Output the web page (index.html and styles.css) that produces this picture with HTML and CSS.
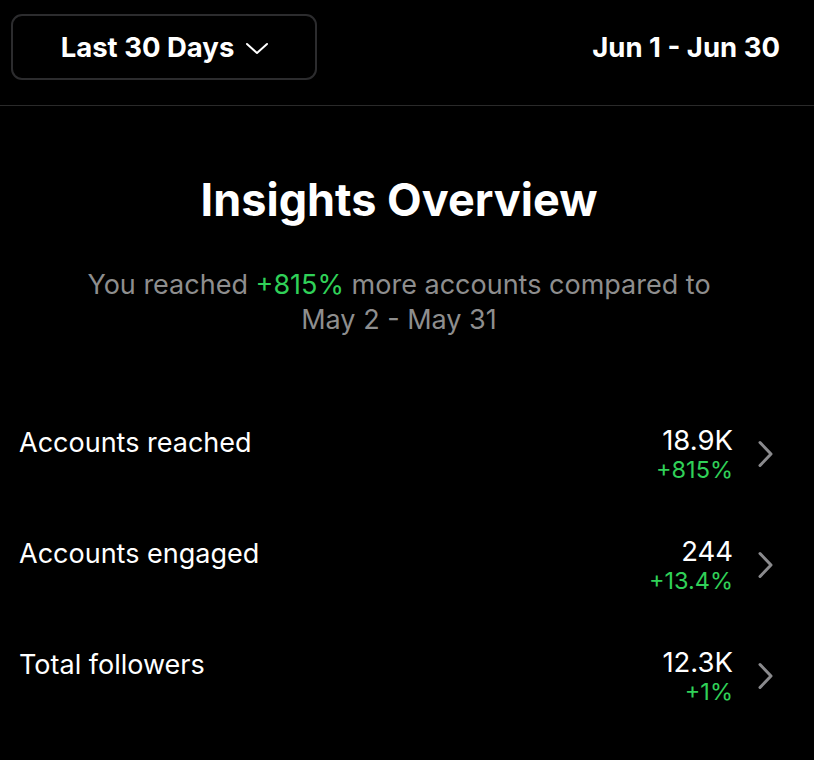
FILE: index.html
```html
<!DOCTYPE html>
<html lang="en">
<head>
    <meta charset="UTF-8">
    <meta name="viewport" content="width=device-width, initial-scale=1.0">
    <title>Insights Overview</title>
    <link rel="stylesheet" href="styles.css">
</head>
<body>
    <!-- Period selector -->
    <header class="topbar">
        <button class="period-btn">
            Last 30 Days
            <svg class="caret" width="24" height="13" viewBox="0 0 24 13"><path d="M2 2 L12 11 L22 2" fill="none" stroke="#fff" stroke-width="2" stroke-linecap="round" stroke-linejoin="round"/></svg>
        </button>
        <span class="range">Jun 1 - Jun 30</span>
    </header>

    <!-- Overview -->
    <section class="overview">
        <h1>Insights Overview</h1>
        <p class="summary">You reached <span class="up">+815%</span> more accounts compared to<br>May 2 - May 31</p>
    </section>

    <!-- Metrics -->
    <ul class="metrics">
        <li class="metric">
            <span class="label">Accounts reached</span>
            <div class="values">
                <span class="value">18.9K</span>
                <span class="up change">+815%</span>
            </div>
            <svg class="chevron" width="17" height="28" viewBox="0 0 17 28"><path d="M3 2.5 L14 14 L3 25.5" fill="none" stroke="#8a8a8d" stroke-width="3" stroke-linecap="round" stroke-linejoin="round"/></svg>
        </li>
        <li class="metric">
            <span class="label">Accounts engaged</span>
            <div class="values">
                <span class="value">244</span>
                <span class="up change">+13.4%</span>
            </div>
            <svg class="chevron" width="17" height="28" viewBox="0 0 17 28"><path d="M3 2.5 L14 14 L3 25.5" fill="none" stroke="#8a8a8d" stroke-width="3" stroke-linecap="round" stroke-linejoin="round"/></svg>
        </li>
        <li class="metric">
            <span class="label">Total followers</span>
            <div class="values">
                <span class="value">12.3K</span>
                <span class="up change">+1%</span>
            </div>
            <svg class="chevron" width="17" height="28" viewBox="0 0 17 28"><path d="M3 2.5 L14 14 L3 25.5" fill="none" stroke="#8a8a8d" stroke-width="3" stroke-linecap="round" stroke-linejoin="round"/></svg>
        </li>
    </ul>
</body>
</html>
```

FILE: styles.css
```css
/* Global styling */
* { box-sizing: border-box; margin: 0; padding: 0; font-family: Inter, "Noto Sans", sans-serif; }
body { background: #000; color: #fff; width: 814px; height: 760px; overflow: hidden; }

/* Top bar */
.topbar { display: flex; align-items: center; justify-content: space-between; padding: 14px 34px 25px 11px; border-bottom: 1px solid #2a2a2a; }
.period-btn {
    display: flex; align-items: center; justify-content: center; gap: 11px;
    width: 306px; height: 66px; background: #000; color: #fff;
    border: 2px solid #2c2c2e; border-radius: 11px;
    font-size: 27.5px; font-weight: 700; padding-left: 2px;
}
.caret { margin-top: 2px; }
.range { font-size: 27.5px; font-weight: 700; }

/* Overview */
.overview { text-align: center; padding: 67px 16px 0 0; }
.overview h1 { font-size: 45px; font-weight: 700; line-height: 54px; }
.summary { margin-top: 40px; font-size: 27px; line-height: 35px; color: #8e8e8e; }
.up { color: #30d158; }

/* Metrics list */
.metrics { list-style: none; margin-top: 61px; }
.metric { display: flex; align-items: center; height: 111px; padding: 0 40px 0 19px; }
.label { flex: 1; font-size: 27px; line-height: 34px; margin-top: -22px; }
.values { display: flex; flex-direction: column; align-items: flex-end; }
.value { font-size: 27.5px; line-height: 32px; }
.change { font-size: 23.5px; line-height: 28px; }
.chevron { margin-left: 24px; }
```
